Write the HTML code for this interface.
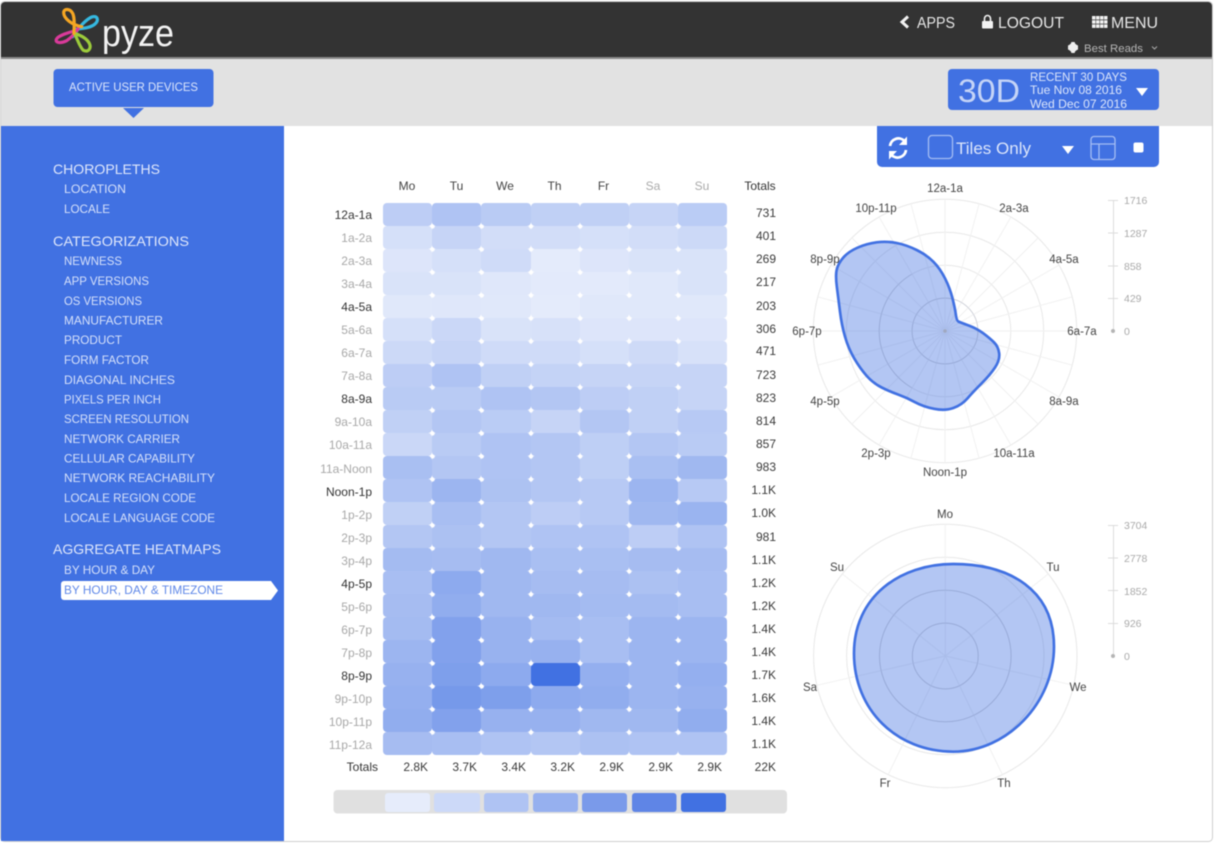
<!DOCTYPE html>
<html><head><meta charset="utf-8"><title>Pyze</title>
<style>
html,body{margin:0;padding:0;width:1214px;height:844px;overflow:hidden;background:#fff}
#w{position:absolute;left:0;top:0;width:1214px;height:844px;filter:blur(.5px)}
svg{position:absolute;left:0;top:0}
text{font-family:"Liberation Sans",sans-serif}
.h{font-size:14px;fill:#dfe7fb}
.i{font-size:12px;fill:#d5e0fa}
.l{font-size:12px;fill:#a8a8a8;text-anchor:end}
.d{fill:#333}
.c{font-size:12px;fill:#444;text-anchor:middle}
.t{font-size:12px;fill:#3a3a3a;text-anchor:end}
.r{font-size:11.5px;fill:#444;text-anchor:middle}
.a{font-size:10.5px;fill:#aaa}
.n{font-size:16px;fill:#e6e6e6}
.w{font-size:12px;fill:#dbe5fb}
#g{position:absolute;left:383px;top:203px;width:344.4px;display:grid;grid-template-columns:repeat(7,49.2px);grid-auto-rows:23px}
#g i{display:block;background:#4171e2;border-radius:4px}
#o{position:absolute;left:407.6px;top:214.5px;width:295.2px;height:529px;background-image:radial-gradient(circle,#fff 1.7px,rgba(255,255,255,0) 2.4px);background-size:49.2px 23px}
</style></head><body><div id="w">
<svg width="1214" height="844" viewBox="0 0 1214 844">
<rect x="0.5" y="1.5" width="1212" height="840" rx="4" fill="#fff" stroke="#cfcfcf"/>
<path d="M1 58V6a4 4 0 0 1 4-4H1208a4 4 0 0 1 4 4V58Z" fill="#333"/>
<rect x="1" y="57" width="1211" height="2" fill="#8a8a8a"/>
<rect x="1" y="59" width="1211" height="67" fill="#e2e2e2"/>
<rect x="1" y="126" width="283" height="715" fill="#4171e2"/>

<!-- logo -->
<g transform="scale(.33333)" fill="none" stroke-width="9.500" stroke-linecap="round">
<path d="M218 110C235 85 255 60 275 51C292 45 298 60 285 72C270 85 245 85 225 88" stroke="#35b8e0"/>
<path d="M232 90C210 97 175 105 169 118C165 130 185 130 200 122C215 112 225 100 235 85" stroke="#d93a9a"/>
<path d="M222 98C232 115 238 140 250 151C265 158 275 145 268 130C260 115 240 105 222 100" stroke="#9ccb3b"/>
<path d="M245 80C215 75 191 55 191 38C191 25 210 25 218 40C225 55 222 80 222 100" stroke="#f5a623"/>
</g>
<text x="102" y="46" font-size="38" fill="#f2f2f2" textLength="72" lengthAdjust="spacingAndGlyphs">pyze</text>

<!-- top nav -->
<path d="M908 16.500L902 22L908 27.500" fill="none" stroke="#f2f2f2" stroke-width="3"/>
<text class="n" x="917" y="28" textLength="38" lengthAdjust="spacingAndGlyphs">APPS</text>
<path d="M984.500 21v-2.500a3 3 0 0 1 6 0V21" fill="none" stroke="#f2f2f2" stroke-width="1.600"/>
<rect x="982" y="21" width="11" height="7.500" rx="1" fill="#f2f2f2"/>
<text class="n" x="998" y="28" textLength="66" lengthAdjust="spacingAndGlyphs">LOGOUT</text>
<g fill="#f2f2f2">
<rect x="1092" y="16" width="3.500" height="3.500"/><rect x="1096" y="16" width="3.500" height="3.500"/><rect x="1100" y="16" width="3.500" height="3.500"/><rect x="1104" y="16" width="3.500" height="3.500"/>
<rect x="1092" y="20.200" width="3.500" height="3.500"/><rect x="1096" y="20.200" width="3.500" height="3.500"/><rect x="1100" y="20.200" width="3.500" height="3.500"/><rect x="1104" y="20.200" width="3.500" height="3.500"/>
<rect x="1092" y="24.400" width="3.500" height="3.500"/><rect x="1096" y="24.400" width="3.500" height="3.500"/><rect x="1100" y="24.400" width="3.500" height="3.500"/><rect x="1104" y="24.400" width="3.500" height="3.500"/>
</g>
<text class="n" x="1111" y="28" textLength="47" lengthAdjust="spacingAndGlyphs">MENU</text>
<circle cx="1073" cy="47.500" r="4.500" fill="#eee"/>
<rect x="1068" y="45" width="10" height="5" rx="1" fill="#eee"/>
<rect x="1071" y="42" width="4" height="11" rx="1" fill="#eee"/>
<text x="1084" y="52" font-size="11" fill="#b5b5b5" textLength="59" lengthAdjust="spacingAndGlyphs">Best Reads</text>
<path d="M1152 46.500l2.500 2.500 2.500-2.500" fill="none" stroke="#aaa" stroke-width="1"/>

<!-- active user button -->
<rect x="53.500" y="69" width="160" height="38" rx="4" fill="#4171e2"/>
<path d="M123 108H144L133.500 118Z" fill="#4171e2"/>
<text class="w" x="69" y="91" textLength="129" lengthAdjust="spacingAndGlyphs">ACTIVE USER DEVICES</text>

<!-- date button -->
<rect x="948" y="69" width="211" height="41" rx="4" fill="#4171e2"/>
<text x="958" y="102" font-size="32" fill="#c5d4f7" textLength="62" lengthAdjust="spacingAndGlyphs">30D</text>
<text class="w" x="1030" y="81" textLength="97" lengthAdjust="spacingAndGlyphs">RECENT 30 DAYS</text>
<text class="w" x="1030" y="94" textLength="92" lengthAdjust="spacingAndGlyphs">Tue Nov 08 2016</text>
<text class="w" x="1030" y="108" textLength="97" lengthAdjust="spacingAndGlyphs">Wed Dec 07 2016</text>
<path d="M1136 88H1148L1142 96Z" fill="#fff"/>

<!-- toolbar -->
<path d="M877 126H1159V162a5 5 0 0 1-5 5H882a5 5 0 0 1-5-5Z" fill="#4171e2"/>
<g fill="none" stroke="#fff" stroke-width="2.800">
<path d="M890 146a8.500 8.500 0 0 1 14.500-5"/>
<path d="M906 150a8.500 8.500 0 0 1-14.500 5"/>
</g>
<path d="M907 136.500V145H899ZM889 159.500V151H897Z" fill="#fff"/>
<rect x="928.500" y="135.500" width="24" height="23" rx="3.500" fill="none" stroke="#a5bdf3" stroke-width="1.300"/>
<text x="956" y="154" font-size="17" fill="#dbe5fb" textLength="75" lengthAdjust="spacingAndGlyphs">Tiles Only</text>
<path d="M1062 146H1074L1068 154Z" fill="#fff"/>
<g fill="none" stroke="#a5bdf3" stroke-width="1.300">
<rect x="1091" y="136.500" width="24" height="23" rx="3"/>
<path d="M1091 144H1115M1099 144V159.500"/>
</g>
<rect x="1133.500" y="142.500" width="10" height="10" rx="2" fill="#fff"/>

<!-- sidebar -->
<text class="h" x="53" y="174" textLength="107" lengthAdjust="spacingAndGlyphs">CHOROPLETHS</text>
<text class="i" x="64" y="193" textLength="62" lengthAdjust="spacingAndGlyphs">LOCATION</text>
<text class="i" x="64" y="213" textLength="46" lengthAdjust="spacingAndGlyphs">LOCALE</text>
<text class="h" x="53" y="246" textLength="136" lengthAdjust="spacingAndGlyphs">CATEGORIZATIONS</text>
<text class="i" x="64" y="265" textLength="58" lengthAdjust="spacingAndGlyphs">NEWNESS</text>
<text class="i" x="64" y="285" textLength="85" lengthAdjust="spacingAndGlyphs">APP VERSIONS</text>
<text class="i" x="64" y="305" textLength="78" lengthAdjust="spacingAndGlyphs">OS VERSIONS</text>
<text class="i" x="64" y="324.500" textLength="99" lengthAdjust="spacingAndGlyphs">MANUFACTURER</text>
<text class="i" x="64" y="344" textLength="58" lengthAdjust="spacingAndGlyphs">PRODUCT</text>
<text class="i" x="64" y="364" textLength="85" lengthAdjust="spacingAndGlyphs">FORM FACTOR</text>
<text class="i" x="64" y="384" textLength="111" lengthAdjust="spacingAndGlyphs">DIAGONAL INCHES</text>
<text class="i" x="64" y="403.500" textLength="97" lengthAdjust="spacingAndGlyphs">PIXELS PER INCH</text>
<text class="i" x="64" y="423" textLength="125" lengthAdjust="spacingAndGlyphs">SCREEN RESOLUTION</text>
<text class="i" x="64" y="443" textLength="116" lengthAdjust="spacingAndGlyphs">NETWORK CARRIER</text>
<text class="i" x="64" y="462.500" textLength="131" lengthAdjust="spacingAndGlyphs">CELLULAR CAPABILITY</text>
<text class="i" x="64" y="482" textLength="151" lengthAdjust="spacingAndGlyphs">NETWORK REACHABILITY</text>
<text class="i" x="64" y="502" textLength="132" lengthAdjust="spacingAndGlyphs">LOCALE REGION CODE</text>
<text class="i" x="64" y="522" textLength="151" lengthAdjust="spacingAndGlyphs">LOCALE LANGUAGE CODE</text>
<text class="h" x="53" y="554" textLength="168" lengthAdjust="spacingAndGlyphs">AGGREGATE HEATMAPS</text>
<text class="i" x="64" y="574" textLength="91" lengthAdjust="spacingAndGlyphs">BY HOUR &amp; DAY</text>
<path d="M64 581H271L278 590.500L271 600H64a3 3 0 0 1-3-3V584a3 3 0 0 1 3-3Z" fill="#fff"/>
<text x="64" y="594" font-size="12" fill="#5f88e8" textLength="159" lengthAdjust="spacingAndGlyphs">BY HOUR, DAY &amp; TIMEZONE</text>

<!-- heat headers -->
<text class="c" x="407" y="190">Mo</text><text class="c" x="456.500" y="190">Tu</text><text class="c" x="505" y="190">We</text><text class="c" x="554.500" y="190">Th</text><text class="c" x="603.500" y="190">Fr</text><text class="c" x="653" y="190" style="fill:#aaa">Sa</text><text class="c" x="702" y="190" style="fill:#aaa">Su</text><text class="c" x="760" y="190" style="fill:#333">Totals</text>

<text class="l d" x="372" y="219">12a-1a</text>
<text class="l" x="372" y="242">1a-2a</text>
<text class="l" x="372" y="265">2a-3a</text>
<text class="l" x="372" y="288">3a-4a</text>
<text class="l d" x="372" y="311">4a-5a</text>
<text class="l" x="372" y="334">5a-6a</text>
<text class="l" x="372" y="357">6a-7a</text>
<text class="l" x="372" y="380">7a-8a</text>
<text class="l d" x="372" y="403">8a-9a</text>
<text class="l" x="372" y="426">9a-10a</text>
<text class="l" x="372" y="449">10a-11a</text>
<text class="l" x="372" y="473">11a-Noon</text>
<text class="l d" x="372" y="496">Noon-1p</text>
<text class="l" x="372" y="519">1p-2p</text>
<text class="l" x="372" y="542">2p-3p</text>
<text class="l" x="372" y="565">3p-4p</text>
<text class="l d" x="372" y="588">4p-5p</text>
<text class="l" x="372" y="611">5p-6p</text>
<text class="l" x="372" y="634">6p-7p</text>
<text class="l" x="372" y="657">7p-8p</text>
<text class="l d" x="372" y="680">8p-9p</text>
<text class="l" x="372" y="703">9p-10p</text>
<text class="l" x="372" y="726">10p-11p</text>
<text class="l" x="372" y="749">11p-12a</text>

<text class="t" x="776" y="217">731</text>
<text class="t" x="776" y="240">401</text>
<text class="t" x="776" y="263">269</text>
<text class="t" x="776" y="286">217</text>
<text class="t" x="776" y="310">203</text>
<text class="t" x="776" y="333">306</text>
<text class="t" x="776" y="355">471</text>
<text class="t" x="776" y="379">723</text>
<text class="t" x="776" y="402">823</text>
<text class="t" x="776" y="425">814</text>
<text class="t" x="776" y="448">857</text>
<text class="t" x="776" y="471">983</text>
<text class="t" x="776" y="494">1.1K</text>
<text class="t" x="776" y="517">1.0K</text>
<text class="t" x="776" y="541">981</text>
<text class="t" x="776" y="564">1.1K</text>
<text class="t" x="776" y="587">1.2K</text>
<text class="t" x="776" y="610">1.2K</text>
<text class="t" x="776" y="633">1.4K</text>
<text class="t" x="776" y="656">1.4K</text>
<text class="t" x="776" y="679">1.7K</text>
<text class="t" x="776" y="702">1.6K</text>
<text class="t" x="776" y="725">1.4K</text>
<text class="t" x="776" y="748">1.1K</text>

<text class="t" x="378" y="771" style="fill:#333">Totals</text>
<text class="t" x="428" y="771">2.8K</text><text class="t" x="477" y="771">3.7K</text><text class="t" x="526" y="771">3.4K</text><text class="t" x="575" y="771">3.2K</text><text class="t" x="624" y="771">2.9K</text><text class="t" x="673" y="771">2.9K</text><text class="t" x="722" y="771">2.9K</text><text class="t" x="776" y="771">22K</text>

<!-- legend -->
<rect x="333.500" y="790" width="453.500" height="23.500" rx="4" fill="#e0e0e0"/>
<rect x="385" y="793" width="45" height="19" rx="3" fill="#e6ecfb"/>
<rect x="434" y="793" width="46" height="19" rx="3" fill="#ccd9f8"/>
<rect x="484" y="793" width="44.500" height="19" rx="3" fill="#afc3f3"/>
<rect x="533" y="793" width="45" height="19" rx="3" fill="#96b0ef"/>
<rect x="582" y="793" width="45" height="19" rx="3" fill="#7a9aea"/>
<rect x="632" y="793" width="44.500" height="19" rx="3" fill="#5f85e6"/>
<rect x="681" y="793" width="45" height="19" rx="3" fill="#4171e2"/>

<!-- radar 1 -->
<g transform="translate(945 331)" fill="none" stroke="#e8e8e8" stroke-width="1">
<circle r="32.900"/><circle r="65.800"/><circle r="98.700"/><circle r="131.700"/>
<path stroke="#f1f1f1" d="M0 0V-131.700M0 0V131.700M0 0H131.700M0 0H-131.700M0 0L34.100-127.200M0 0L65.900-114M0 0L93.100-93.100M0 0L114-65.900M0 0L127.200-34.100M0 0L127.200 34.100M0 0L114 65.900M0 0L93.100 93.100M0 0L65.900 114M0 0L34.100 127.200M0 0L-34.100 127.200M0 0L-65.900 114M0 0L-93.100 93.100M0 0L-114 65.900M0 0L-127.200 34.100M0 0L-127.200-34.100M0 0L-114-65.900M0 0L-93.100-93.100M0 0L-65.900-114M0 0L-34.100-127.200"/>
</g>
<g transform="translate(790 175) scale(.33333)">
<path d="M497.500 418.500Q495 400 487.500 370Q480 340 465 310Q450 280 430 260Q410 240 380 225Q350 210 320 204Q290 198 260 202Q230 206 202.500 218Q175 230 160 247.500Q145 265 140.500 282.500Q136 300 140.500 335Q145 370 150 410Q155 450 165 485Q175 520 192.500 550Q210 580 230 602.500Q250 625 275 637.500Q300 650 325 659Q350 668 375 681.500Q400 695 432.500 701.500Q465 708 490 699Q515 690 532.500 670Q550 650 575 625Q600 600 615 577.500Q630 555 627.500 535Q625 515 612.500 502.500Q600 490 580 475Q560 460 535 451Q510 442 505 439.500Q500 437 497.500 418.500Z" fill="#4171e2" fill-opacity=".4" stroke="#4171e2" stroke-width="8" stroke-linejoin="round"/>
</g>
<g transform="translate(945 331)" fill="none" stroke="#5a6a95" stroke-width=".7" stroke-opacity=".22">
<circle r="32.900"/>
<path d="M-65.800 0A65.800 65.800 0 0 1-32.900-57M-32.900 57A65.800 65.800 0 0 1-65.800 0"/>
</g>
<circle cx="945" cy="331" r="1.800" fill="#a0a8c0"/>
<text class="r" x="945" y="192">12a-1a</text><text class="r" x="1014" y="212">2a-3a</text><text class="r" x="1064" y="263">4a-5a</text><text class="r" x="1082" y="335">6a-7a</text><text class="r" x="1064" y="405">8a-9a</text><text class="r" x="1014" y="457">10a-11a</text><text class="r" x="945" y="476">Noon-1p</text><text class="r" x="876" y="457">2p-3p</text><text class="r" x="825" y="405">4p-5p</text><text class="r" x="807" y="335">6p-7p</text><text class="r" x="825" y="263">8p-9p</text><text class="r" x="876" y="212">10p-11p</text>
<g stroke="#dcdcdc" stroke-width="1"><path d="M1113.500 200V331M1108 200.500H1118M1108 233H1118M1108 266H1118M1108 298.500H1118"/></g>
<circle cx="1113" cy="331" r="2" fill="#b5b5b5"/>
<text class="a" x="1124" y="204">1716</text><text class="a" x="1124" y="237">1287</text><text class="a" x="1124" y="270">858</text><text class="a" x="1124" y="302">429</text><text class="a" x="1124" y="335">0</text>

<!-- radar 2 -->
<g transform="translate(945.300 656)" fill="none" stroke="#e8e8e8" stroke-width="1">
<circle r="32.900"/><circle r="65.800"/><circle r="98.700"/><circle r="131.700"/>
<path stroke="#f1f1f1" d="M0 0V-131.700M0 0L103-82.100M0 0L128.400 29.300M0 0L57.100 118.700M0 0L-57.100 118.700M0 0L-128.400 29.300M0 0L-103-82.100"/>
</g>
<g transform="translate(790 500) scale(.33333)">
<path d="M490 192C660 192 792 270 792 440C792 610 650 755 490 755C320 755 192 630 192 460C192 290 330 192 490 192Z" fill="#4171e2" fill-opacity=".4" stroke="#4171e2" stroke-width="8" stroke-linejoin="round"/>
</g>
<g transform="translate(945.300 656)" fill="none" stroke="#5a6a95" stroke-width=".7" stroke-opacity=".22"><circle r="32.900"/><circle r="65.800"/></g>
<text class="r" x="945" y="518">Mo</text><text class="r" x="1053" y="571">Tu</text><text class="r" x="1078" y="691">We</text><text class="r" x="1004" y="787">Th</text><text class="r" x="885" y="787">Fr</text><text class="r" x="810" y="691">Sa</text><text class="r" x="837" y="571">Su</text>
<g stroke="#dcdcdc" stroke-width="1"><path d="M1113.500 525V656M1108 525.500H1118M1108 558H1118M1108 590.500H1118M1108 623.500H1118"/></g>
<circle cx="1113" cy="656" r="2" fill="#b5b5b5"/>
<text class="a" x="1124" y="529">3704</text><text class="a" x="1124" y="562">2778</text><text class="a" x="1124" y="595">1852</text><text class="a" x="1124" y="627">926</text><text class="a" x="1124" y="660">0</text>
</svg>

<div id="g">
<i style="opacity:.35"></i><i style="opacity:.42"></i><i style="opacity:.37"></i><i style="opacity:.33"></i><i style="opacity:.33"></i><i style="opacity:.3"></i><i style="opacity:.36"></i>
<i style="opacity:.22"></i><i style="opacity:.3"></i><i style="opacity:.24"></i><i style="opacity:.24"></i><i style="opacity:.22"></i><i style="opacity:.24"></i><i style="opacity:.27"></i>
<i style="opacity:.18"></i><i style="opacity:.22"></i><i style="opacity:.25"></i><i style="opacity:.14"></i><i style="opacity:.18"></i><i style="opacity:.2"></i><i style="opacity:.2"></i>
<i style="opacity:.2"></i><i style="opacity:.2"></i><i style="opacity:.17"></i><i style="opacity:.15"></i><i style="opacity:.15"></i><i style="opacity:.16"></i><i style="opacity:.2"></i>
<i style="opacity:.16"></i><i style="opacity:.17"></i><i style="opacity:.16"></i><i style="opacity:.14"></i><i style="opacity:.16"></i><i style="opacity:.16"></i><i style="opacity:.16"></i>
<i style="opacity:.22"></i><i style="opacity:.28"></i><i style="opacity:.2"></i><i style="opacity:.21"></i><i style="opacity:.18"></i><i style="opacity:.18"></i><i style="opacity:.18"></i>
<i style="opacity:.27"></i><i style="opacity:.3"></i><i style="opacity:.25"></i><i style="opacity:.25"></i><i style="opacity:.22"></i><i style="opacity:.26"></i><i style="opacity:.21"></i>
<i style="opacity:.35"></i><i style="opacity:.42"></i><i style="opacity:.33"></i><i style="opacity:.31"></i><i style="opacity:.3"></i><i style="opacity:.3"></i><i style="opacity:.3"></i>
<i style="opacity:.37"></i><i style="opacity:.37"></i><i style="opacity:.42"></i><i style="opacity:.4"></i><i style="opacity:.35"></i><i style="opacity:.33"></i><i style="opacity:.3"></i>
<i style="opacity:.33"></i><i style="opacity:.4"></i><i style="opacity:.36"></i><i style="opacity:.3"></i><i style="opacity:.4"></i><i style="opacity:.33"></i><i style="opacity:.38"></i>
<i style="opacity:.28"></i><i style="opacity:.37"></i><i style="opacity:.42"></i><i style="opacity:.4"></i><i style="opacity:.34"></i><i style="opacity:.4"></i><i style="opacity:.37"></i>
<i style="opacity:.45"></i><i style="opacity:.4"></i><i style="opacity:.42"></i><i style="opacity:.4"></i><i style="opacity:.34"></i><i style="opacity:.45"></i><i style="opacity:.5"></i>
<i style="opacity:.42"></i><i style="opacity:.52"></i><i style="opacity:.43"></i><i style="opacity:.4"></i><i style="opacity:.38"></i><i style="opacity:.52"></i><i style="opacity:.38"></i>
<i style="opacity:.33"></i><i style="opacity:.46"></i><i style="opacity:.4"></i><i style="opacity:.35"></i><i style="opacity:.38"></i><i style="opacity:.5"></i><i style="opacity:.53"></i>
<i style="opacity:.4"></i><i style="opacity:.44"></i><i style="opacity:.4"></i><i style="opacity:.42"></i><i style="opacity:.42"></i><i style="opacity:.35"></i><i style="opacity:.42"></i>
<i style="opacity:.48"></i><i style="opacity:.47"></i><i style="opacity:.5"></i><i style="opacity:.45"></i><i style="opacity:.45"></i><i style="opacity:.47"></i><i style="opacity:.47"></i>
<i style="opacity:.46"></i><i style="opacity:.6"></i><i style="opacity:.5"></i><i style="opacity:.47"></i><i style="opacity:.47"></i><i style="opacity:.44"></i><i style="opacity:.46"></i>
<i style="opacity:.47"></i><i style="opacity:.58"></i><i style="opacity:.5"></i><i style="opacity:.5"></i><i style="opacity:.48"></i><i style="opacity:.48"></i><i style="opacity:.46"></i>
<i style="opacity:.48"></i><i style="opacity:.66"></i><i style="opacity:.54"></i><i style="opacity:.48"></i><i style="opacity:.46"></i><i style="opacity:.52"></i><i style="opacity:.52"></i>
<i style="opacity:.52"></i><i style="opacity:.66"></i><i style="opacity:.54"></i><i style="opacity:.55"></i><i style="opacity:.46"></i><i style="opacity:.52"></i><i style="opacity:.52"></i>
<i style="opacity:.55"></i><i style="opacity:.68"></i><i style="opacity:.6"></i><i style="opacity:1"></i><i style="opacity:.56"></i><i style="opacity:.52"></i><i style="opacity:.56"></i>
<i style="opacity:.56"></i><i style="opacity:.72"></i><i style="opacity:.68"></i><i style="opacity:.6"></i><i style="opacity:.58"></i><i style="opacity:.52"></i><i style="opacity:.55"></i>
<i style="opacity:.58"></i><i style="opacity:.66"></i><i style="opacity:.55"></i><i style="opacity:.55"></i><i style="opacity:.5"></i><i style="opacity:.5"></i><i style="opacity:.58"></i>
<i style="opacity:.47"></i><i style="opacity:.46"></i><i style="opacity:.42"></i><i style="opacity:.4"></i><i style="opacity:.44"></i><i style="opacity:.42"></i><i style="opacity:.42"></i>
</div>
<div id="o"></div>
</div></body></html>
